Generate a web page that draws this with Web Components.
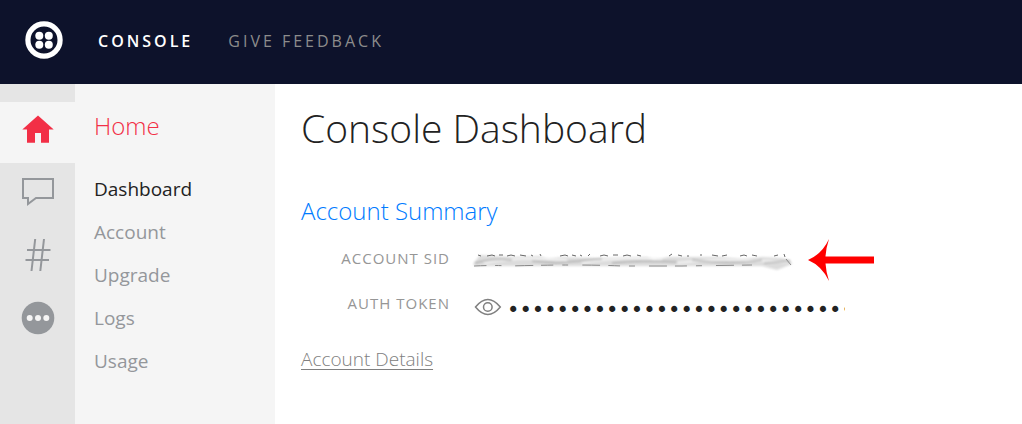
<!DOCTYPE html>
<html lang="en">
<head>
<meta charset="utf-8">
<title>Console Dashboard</title>
<style>
  body { margin: 0; background: #fff; font-family: "Open Sans", "Noto Sans", sans-serif; }
</style>
</head>
<body>
<console-app></console-app>

<script>
const define = (name, html, setup) => {
  const template = document.createElement('template');
  template.innerHTML = html;
  customElements.define(name, class extends HTMLElement {
    constructor() {
      super();
      this.attachShadow({ mode: 'open' }).append(template.content.cloneNode(true));
    }
    connectedCallback() { if (setup) setup(this, this.shadowRoot); }
  });
};

define('top-bar', `
  <style>
    :host { display: block; background: #0d122b; }
    nav { display: flex; align-items: center; gap: 35px; height: 84px; padding: 0 25px 2px; box-sizing: border-box; }
    a { color: #8c8c8c; font-size: 16px; line-height: 24px; letter-spacing: 3px; text-decoration: none; font-weight: 400; }
    a.current { color: #fff; font-weight: 600; }
    .logo { display: block; line-height: 0; padding-bottom: 2px; letter-spacing: 0; }
    svg { width: 38px; height: 38px; }
  </style>
  <nav aria-label="Main">
    <a class="logo" href="#" aria-label="Console home">
      <svg viewBox="0 0 38 38" aria-hidden="true">
        <circle cx="19" cy="19" r="16.1" fill="none" stroke="#fff" stroke-width="5.2"/>
        <g fill="#fff"><circle cx="14.3" cy="14.8" r="4"/><circle cx="23.8" cy="14.8" r="4"/><circle cx="14.3" cy="23.7" r="4"/><circle cx="23.8" cy="23.7" r="4"/></g>
      </svg>
    </a>
    <a class="current" href="#console">CONSOLE</a>
    <a href="#feedback">GIVE FEEDBACK</a>
  </nav>`);

define('product-rail', `
  <style>
    :host { display: block; background: #e5e5e5; color: #94979b; }
    nav { display: flex; flex-direction: column; gap: 2px; padding-top: 18px; }
    a { display: flex; align-items: center; justify-content: center; height: 61px; padding-bottom: 7px; padding-left: 1px; box-sizing: border-box; color: inherit; }
    a.current { background: #f5f5f5; color: #f22f46; }
    svg { width: 34px; height: 34px; }
  </style>
  <nav aria-label="Products">
    <a class="current" href="#home" aria-label="Home"><svg viewBox="0 0 34 34" aria-hidden="true"><path fill="currentColor" d="M17 3.500 L32.700 17.500 H28 V30.700 H20 V21 H14 V30.700 H6 V17.500 H1.300 Z"/></svg></a>
    <a href="#messaging" aria-label="Messaging"><svg viewBox="0 0 34 34" aria-hidden="true"><path fill="none" stroke="currentColor" stroke-width="2" d="M2 4 H32 V23 H15 L7 29 V23 H2 Z"/></svg></a>
    <a href="#numbers" aria-label="Phone numbers"><svg viewBox="0 0 34 34" aria-hidden="true"><path fill="none" stroke="currentColor" stroke-width="2" d="M14.2 1 L10.5 33 M23 1 L19.3 33 M6 12 H29.5 M4.5 22 H28"/></svg></a>
    <a href="#more" aria-label="More products"><svg viewBox="0 0 34 34" aria-hidden="true"><circle cx="17" cy="17" r="16.3" fill="currentColor"/><g fill="#f5f5f5"><circle cx="8.7" cy="17" r="3"/><circle cx="17" cy="17" r="3"/><circle cx="25.3" cy="17" r="3"/></g></svg></a>
  </nav>`);

define('section-menu', `
  <style>
    :host { display: block; background: #f5f5f5; padding: 26px 19px; }
    h2 { margin: 0 0 33px; color: #f22f46; font-size: 24px; line-height: 32px; font-weight: 300; }
    nav { display: flex; flex-direction: column; gap: 15px; align-items: flex-start; }
    ::slotted(a) { color: #94979b; font-size: 19px; line-height: 28px; font-weight: 400; text-decoration: none; }
    ::slotted(a[aria-current]) { color: #222; }
  </style>
  <h2></h2>
  <nav><slot></slot></nav>`,
  (host, root) => { root.querySelector('h2').textContent = host.getAttribute('heading'); });

define('detail-row', `
  <style>
    :host { display: flex; align-items: center; gap: 22px; height: 45px; }
    .label { flex: 0 0 149px; color: #969696; font-size: 15px; line-height: 20px; letter-spacing: 1px; text-align: right; font-weight: 400; padding-bottom: 4px; }
    .value { display: flex; align-items: center; min-width: 0; }
  </style>
  <span class="label"></span>
  <span class="value"><slot></slot></span>`,
  (host, root) => { root.querySelector('.label').textContent = host.getAttribute('label'); });

define('redacted-value', `
  <style>
    :host { display: flex; align-items: center; gap: 14px; }
    svg { display: block; }
  </style>
  <svg width="322" height="24" viewBox="0 0 322 24" role="img" aria-label="Account SID hidden">
    <defs>
      <filter id="soft" x="-5%" y="-30%" width="110%" height="160%"><feGaussianBlur stdDeviation="1"/></filter>
      <filter id="fine" x="-5%" y="-30%" width="110%" height="160%"><feGaussianBlur stdDeviation="0.700"/></filter>
    </defs>
    <path filter="url(#soft)" fill="#dcdcdc" d="M1 16 L8 7 L40 9 L68 8 L76 11 L90 9 L130 10 L175 9 L182 12 L196 9 L222 9 L250 9 L270 11 L290 9 L310 10 L318 12 L320 16 L305 22 L290 18 L200 18 L120 18 L3 18 Z"/>
    <g filter="url(#soft)" fill="none">
      <path stroke="#f4f4f4" stroke-width="2" d="M12 15 Q50 8 95 12 M110 15 Q150 8 190 11 M205 15 Q240 10 275 12 T316 14"/>
      <path stroke="#9a9a9a" d="M3 15 Q20 10 40 12 M60 13 L84 15 L130 11 M140 15 Q170 12 205 14 M220 12 Q260 17 290 12 M292 15 L318 13"/>
    </g>
    <g filter="url(#fine)" fill="none">
      <path stroke="#666" d="M6 7 l3 1 M15 8 l5 -1 l3 1 M27 7 h4 M35 8 l4 -1 l4 1 M48 7 l6 1 M59 7 l2 1 M68 6 l1 2 M88 8 l5 -1 l3 1 M100 7 l4 1 M108 7 l2 1 M116 8 l2 -2 M128 8 l4 -1 l4 1 M141 7 h5 M151 8 l4 -1 l4 1 M165 7 l4 1 M197 8 l3 -2 M206 7 l4 1 M216 7 v2 M229 8 v-2 M240 7 l6 1 M250 8 l5 -1 M268 8 l4 -1 l3 1 M280 7 l5 1 M302 8 l4 -1 M312 6 l1 3"/>
      <path stroke="#888" stroke-dasharray="12 9 6 14 18 8" d="M2 18 Q24 17 38 18 Q105 16 150 18 H210 L280 17 M314 11 L319 17"/>
    </g>
  </svg>
  <svg width="68" height="44" viewBox="0 0 68 44" role="img" aria-label="Arrow pointing at the Account SID">
    <path fill="#f00" d="M0 22 Q14 16 21 1 Q18 10 17.500 18.500 H66 V25.500 H17.500 Q18 34 21 43 Q14 28 0 22 Z"/>
  </svg>`);

define('secret-value', `
  <style>
    :host { display: flex; align-items: center; gap: 5px; }
    button { display: block; border: 0; background: none; padding: 5px 0 0 2px; margin: 0; line-height: 0; color: #808080; cursor: pointer; }
    .mask { width: 338px; overflow: hidden; white-space: nowrap; color: #222; font-family: "DejaVu Sans", sans-serif; font-size: 21px; line-height: 28px; padding-top: 11px; }
  </style>
  <button type="button" aria-label="Show auth token">
    <svg width="28" height="18" viewBox="0 0 28 18" fill="none" stroke="currentColor" stroke-width="1.500" aria-hidden="true">
      <path d="M1.500 9 Q13.800 -6 26.300 9 Q13.800 24 1.500 9 Z"/><circle cx="13.800" cy="9" r="4.300"/>
    </svg>
  </button>
  <span class="mask">••••••••••••••••••••••••••••</span>`);

define('console-app', `
  <style>
    :host { display: flex; flex-direction: column; min-height: 100vh; }
    .body { flex: 1; display: grid; grid-template-columns: 75px 200px minmax(0, 1fr); }
    main { padding: 16px 26px; }
    h1 { margin: 0 0 38px; color: #222; font-size: 39px; line-height: 56px; font-weight: 300; }
    h2 { margin: 0; color: #007bff; font-size: 24px; line-height: 34px; font-weight: 300; }
    .rows { padding: 9px 0 18px; }
    .more { color: #808080; font-size: 19px; line-height: 28px; font-weight: 300; text-underline-offset: 3px; }
  </style>
  <top-bar></top-bar>
  <div class="body">
    <product-rail></product-rail>
    <section-menu heading="Home">
      <a href="#dashboard" aria-current="page">Dashboard</a>
      <a href="#account">Account</a>
      <a href="#upgrade">Upgrade</a>
      <a href="#logs">Logs</a>
      <a href="#usage">Usage</a>
    </section-menu>
    <main>
      <h1>Console Dashboard</h1>
      <h2>Account Summary</h2>
      <div class="rows">
        <detail-row label="ACCOUNT SID"><redacted-value></redacted-value></detail-row>
        <detail-row label="AUTH TOKEN"><secret-value></secret-value></detail-row>
      </div>
      <a class="more" href="#details">Account Details</a>
    </main>
  </div>`);
</script>
</body>
</html>
